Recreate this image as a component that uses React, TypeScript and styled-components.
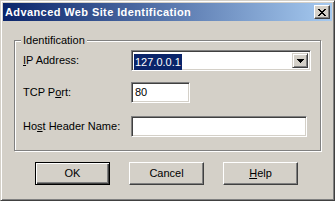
import styled, { createGlobalStyle, css } from "styled-components";

const GlobalStyle = createGlobalStyle`
  html, body {
    margin: 0;
    padding: 0;
    background: #d4d0c8;
  }
  * {
    box-sizing: border-box;
  }
`;

const FONT = `"Liberation Sans", Arial, sans-serif`;

const Window = styled.div`
  width: 335px;
  height: 201px;
  background: #d4d0c8;
  border: 1px solid;
  border-color: #d4d0c8 #404040 #404040 #d4d0c8;
  box-shadow: inset 1px 1px #fff, inset -1px -1px #808080;
  padding: 2px;
  display: flex;
  flex-direction: column;
  font-family: ${FONT};
  font-size: 11px;
  color: #000;
`;

const TitleBar = styled.div`
  height: 18px;
  display: flex;
  align-items: center;
  justify-content: space-between;
  padding: 0 2px 0 2px;
  background: linear-gradient(to right, #0a246a, #a6caf0);
`;

const TitleText = styled.div`
  color: #fff;
  font-weight: bold;
  font-size: 11px;
  letter-spacing: 0.4px;
  line-height: 13px;
  white-space: nowrap;
`;

const CloseButton = styled.div`
  width: 16px;
  height: 14px;
  background: #d4d0c8;
  border: 1px solid;
  border-color: #fff #404040 #404040 #fff;
  box-shadow: inset -1px -1px #808080;
  display: flex;
  align-items: center;
  justify-content: center;
  padding: 1px 0 0 0;
`;

const Body = styled.div`
  padding: 19px 0 0 11px;
  display: flex;
  flex-direction: column;
`;

const GroupBox = styled.div`
  position: relative;
  width: 307px;
  height: 111px;
  border: 1px solid #808080;
  box-shadow: inset 1px 1px #fff, 1px 1px #fff;
  padding: 9px 0 0 8px;
  display: flex;
  flex-direction: column;
`;

const Legend = styled.span`
  position: absolute;
  left: 6px;
  top: -7px;
  padding: 0 2px;
  line-height: 13px;
  background: #d4d0c8;
`;

const Row = styled.div<{ $gap: number }>`
  display: flex;
  align-items: center;
  margin-top: ${(p) => p.$gap}px;
`;

const Label = styled.div`
  width: 108px;
  line-height: 13px;
  white-space: nowrap;
`;

const Key = styled.span`
  text-decoration: underline;
  text-underline-offset: 1px;
`;

const sunken = css`
  background: #fff;
  border: 1px solid;
  border-color: #808080 #fff #fff #808080;
  box-shadow: inset 1px 1px #404040, inset -1px -1px #d4d0c8;
`;

const Combo = styled.div`
  ${sunken}
  width: 180px;
  height: 21px;
  padding: 2px 2px 2px 2px;
  display: flex;
  align-items: stretch;
  justify-content: space-between;
`;

const Selected = styled.span`
  margin-top: 1px;
  height: 16px;
  padding: 0 1px;
  line-height: 16px;
  background: #0a246a;
  color: #fff;
`;

const DropButton = styled.div`
  width: 16px;
  background: #d4d0c8;
  border: 1px solid;
  border-color: #d4d0c8 #404040 #404040 #d4d0c8;
  box-shadow: inset 1px 1px #fff, inset -1px -1px #808080;
  display: flex;
  align-items: center;
  justify-content: center;
`;

const TextBox = styled.div<{ $width: number }>`
  ${sunken}
  width: ${(p) => p.$width}px;
  height: 21px;
  padding: 0 3px;
  line-height: 19px;
`;

const ButtonRow = styled.div`
  display: flex;
  gap: 19px;
  padding-left: 21px;
  margin-top: 11px;
`;

const Button = styled.div<{ $default?: boolean }>`
  width: 75px;
  height: 23px;
  background: #d4d0c8;
  display: flex;
  align-items: center;
  justify-content: center;
  line-height: 13px;
  border: 1px solid;
  border-color: #fff #404040 #404040 #fff;
  box-shadow: inset -1px -1px #808080;
  ${(p) =>
    p.$default &&
    css`
      border-color: #000;
      box-shadow: inset 1px 1px #fff, inset -1px -1px #404040,
        inset -2px -2px #808080;
    `}
`;

function CloseIcon() {
  const cells = [
    [0, 0], [1, 0], [6, 0], [7, 0],
    [1, 1], [2, 1], [5, 1], [6, 1],
    [2, 2], [3, 2], [4, 2], [5, 2],
    [3, 3], [4, 3],
    [2, 4], [3, 4], [4, 4], [5, 4],
    [1, 5], [2, 5], [5, 5], [6, 5],
    [0, 6], [1, 6], [6, 6], [7, 6],
  ];
  return (
    <svg width="8" height="7" viewBox="0 0 8 7" shapeRendering="crispEdges">
      {cells.map(([x, y], i) => (
        <rect key={i} x={x} y={y} width="1" height="1" fill="#000" />
      ))}
    </svg>
  );
}

function ArrowIcon() {
  return (
    <svg width="7" height="4" viewBox="0 0 7 4" shapeRendering="crispEdges">
      <rect x="0" y="0" width="7" height="1" fill="#000" />
      <rect x="1" y="1" width="5" height="1" fill="#000" />
      <rect x="2" y="2" width="3" height="1" fill="#000" />
      <rect x="3" y="3" width="1" height="1" fill="#000" />
    </svg>
  );
}

export default function App() {
  return (
    <>
      <GlobalStyle />
      <Window>
        <TitleBar>
          <TitleText>Advanced Web Site Identification</TitleText>
          <CloseButton>
            <CloseIcon />
          </CloseButton>
        </TitleBar>
        <Body>
          <GroupBox>
            <Legend>Identification</Legend>
            <Row $gap={0}>
              <Label>
                <Key>I</Key>P Address:
              </Label>
              <Combo>
                <Selected>127.0.0.1</Selected>
                <DropButton>
                  <ArrowIcon />
                </DropButton>
              </Combo>
            </Row>
            <Row $gap={11}>
              <Label>
                TCP P<Key>o</Key>rt:
              </Label>
              <TextBox $width={59}>80</TextBox>
            </Row>
            <Row $gap={13}>
              <Label>
                Ho<Key>s</Key>t Header Name:
              </Label>
              <TextBox $width={176} />
            </Row>
          </GroupBox>
          <ButtonRow>
            <Button $default>OK</Button>
            <Button>Cancel</Button>
            <Button>
              <span>
                <Key>H</Key>elp
              </span>
            </Button>
          </ButtonRow>
        </Body>
      </Window>
    </>
  );
}
